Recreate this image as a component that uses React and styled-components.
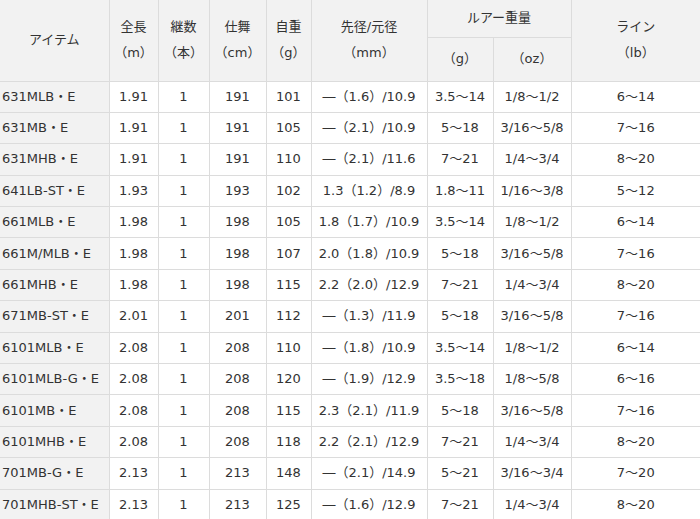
import React from "react";
import styled, { createGlobalStyle } from "styled-components";

const Global = createGlobalStyle`
  html, body { margin: 0; padding: 0; background: #fff; }
  body { font-family: "DejaVu Sans", "Noto Sans CJK JP", sans-serif; color: #333; }
`;

const Table = styled.table`
  border-collapse: collapse;
  table-layout: fixed;
  width: 700px;
  font-size: 13px;
  color: #333;
`;

const HeadRow = styled.tr`
  height: ${(p) => p.$h}px;
`;

const Th = styled.th`
  background: #f2f2f2;
  font-weight: normal;
  text-align: center;
  vertical-align: middle;
  border: 1px solid #dcdcdc;
  border-top: none;
  line-height: 26px;
  padding: 0 0 ${(p) => (p.$pb ?? 1)}px;
  &:first-child { border-left: none; }
  &:last-child { border-right: none; }
`;

const Row = styled.tr`
  height: 31.4px;
`;

const Td = styled.td`
  border: 1px solid #dcdcdc;
  text-align: center;
  vertical-align: middle;
  padding: 0;
  white-space: nowrap;
  line-height: 16px;
  &:last-child { border-right: none; }
`;

const ItemTd = styled(Td)`
  background: #f2f2f2;
  text-align: left;
  padding-left: 2px;
  border-left: none;
`;

const widths = [109, 49, 51, 57, 45, 116, 66, 78, 129];

const rows = [
  ["631MLB・E", "1.91", "1", "191", "101", "―（1.6）/10.9", "3.5～14", "1/8～1/2", "6～14"],
  ["631MB・E", "1.91", "1", "191", "105", "―（2.1）/10.9", "5～18", "3/16～5/8", "7～16"],
  ["631MHB・E", "1.91", "1", "191", "110", "―（2.1）/11.6", "7～21", "1/4～3/4", "8～20"],
  ["641LB-ST・E", "1.93", "1", "193", "102", "1.3（1.2）/8.9", "1.8～11", "1/16～3/8", "5～12"],
  ["661MLB・E", "1.98", "1", "198", "105", "1.8（1.7）/10.9", "3.5～14", "1/8～1/2", "6～14"],
  ["661M/MLB・E", "1.98", "1", "198", "107", "2.0（1.8）/10.9", "5～18", "3/16～5/8", "7～16"],
  ["661MHB・E", "1.98", "1", "198", "115", "2.2（2.0）/12.9", "7～21", "1/4～3/4", "8～20"],
  ["671MB-ST・E", "2.01", "1", "201", "112", "―（1.3）/11.9", "5～18", "3/16～5/8", "7～16"],
  ["6101MLB・E", "2.08", "1", "208", "110", "―（1.8）/10.9", "3.5～14", "1/8～1/2", "6～14"],
  ["6101MLB-G・E", "2.08", "1", "208", "120", "―（1.9）/12.9", "3.5～18", "1/8～5/8", "6～16"],
  ["6101MB・E", "2.08", "1", "208", "115", "2.3（2.1）/11.9", "5～18", "3/16～5/8", "7～16"],
  ["6101MHB・E", "2.08", "1", "208", "118", "2.2（2.1）/12.9", "7～21", "1/4～3/4", "8～20"],
  ["701MB-G・E", "2.13", "1", "213", "148", "―（2.1）/14.9", "5～21", "3/16～3/4", "7～20"],
  ["701MHB-ST・E", "2.13", "1", "213", "125", "―（1.6）/12.9", "7～21", "1/4～3/4", "8～20"],
];

const TwoLine = ({ a, b }) => (
  <>
    {a}
    <br />
    {b}
  </>
);

export default function App() {
  return (
    <>
      <Global />
      <Table>
        <colgroup>
          {widths.map((w, i) => (
            <col key={i} style={{ width: w }} />
          ))}
        </colgroup>
        <thead>
          <HeadRow $h={37}>
            <Th rowSpan={2} $pb={0}>アイテム</Th>
            <Th rowSpan={2}><TwoLine a="全長" b="（m）" /></Th>
            <Th rowSpan={2}><TwoLine a="継数" b="（本）" /></Th>
            <Th rowSpan={2}><TwoLine a="仕舞" b="（cm）" /></Th>
            <Th rowSpan={2}><TwoLine a="自重" b="（g）" /></Th>
            <Th rowSpan={2}><TwoLine a="先径/元径" b="（mm）" /></Th>
            <Th colSpan={2} $pb={0}>ルアー重量</Th>
            <Th rowSpan={2}><TwoLine a="ライン" b="（lb）" /></Th>
          </HeadRow>
          <HeadRow $h={44}>
            <Th $pb={0}>（g）</Th>
            <Th $pb={0}>（oz）</Th>
          </HeadRow>
        </thead>
        <tbody>
          {rows.map((r) => (
            <Row key={r[0]}>
              <ItemTd>{r[0]}</ItemTd>
              {r.slice(1).map((c, i) => (
                <Td key={i}>{c}</Td>
              ))}
            </Row>
          ))}
        </tbody>
      </Table>
    </>
  );
}
